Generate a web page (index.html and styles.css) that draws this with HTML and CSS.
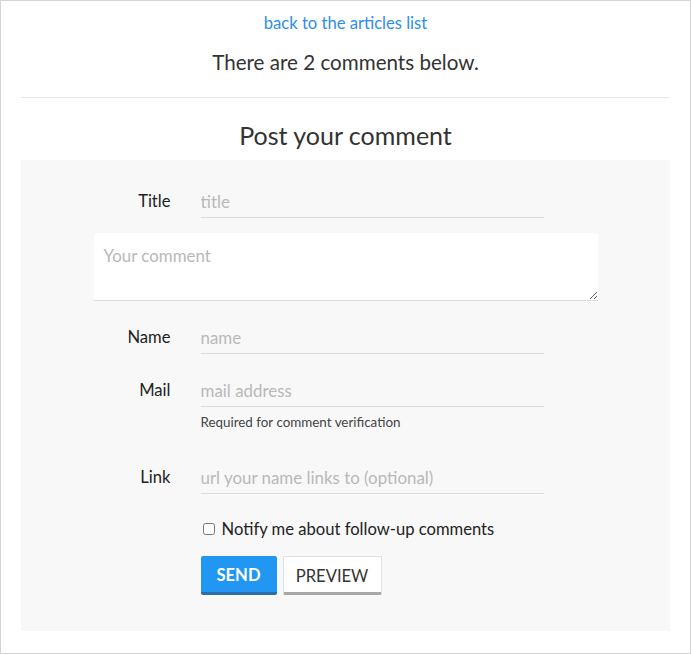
FILE: index.html
```html
<!DOCTYPE html>
<html>
<head>
<meta charset="utf-8">
<link rel="stylesheet" href="styles.css">
</head>
<body>
<div class="page">
  <div class="top">
    <a class="back" href="#">back to the articles list</a>
    <p class="count">There are 2 comments below.</p>
  </div>
  <hr class="sep">
  <h2 class="post-title">Post your comment</h2>
  <form class="form-box">
    <div class="inner">
      <div class="row row-title">
        <label class="lbl">Title</label>
        <input class="field" type="text" placeholder="title">
      </div>
      <textarea class="comment" placeholder="Your comment"></textarea>
      <div class="row row-name">
        <label class="lbl">Name</label>
        <input class="field" type="text" placeholder="name">
      </div>
      <div class="row row-mail">
        <label class="lbl">Mail</label>
        <input class="field" type="text" placeholder="mail address">
      </div>
      <div class="row row-help">
        <span></span>
        <span class="help">Required for comment verification</span>
      </div>
      <div class="row row-link">
        <label class="lbl">Link</label>
        <input class="field" type="text" placeholder="url your name links to (optional)">
      </div>
      <div class="row row-check">
        <span></span>
        <label class="check"><input type="checkbox"> Notify me about follow-up comments</label>
      </div>
      <div class="row row-btns">
        <span></span>
        <div class="btns">
          <button type="button" class="btn btn-send">SEND</button>
          <button type="button" class="btn btn-preview">PREVIEW</button>
        </div>
      </div>
    </div>
  </form>
</div>
</body>
</html>
```
FILE: styles.css
```css
* { box-sizing: border-box; }
html, body { margin: 0; padding: 0; background: #fff; }
body {
  font-family: Lato, "Open Sans", sans-serif;
  color: #333;
}
.page {
  width: 691px;
  height: 654px;
  border: 1px solid #d4d4d4;
  padding: 0 20px;
  overflow: hidden;
}
.top { text-align: center; padding-top: 11px; }
.back {
  display: block;
  font-size: 16.6px;
  line-height: 22px;
  color: #2e8ee8;
  text-decoration: none;
}
.count {
  margin: 15px 0 0;
  font-size: 20.6px;
  line-height: 26px;
  color: #333;
}
.sep {
  margin: 22px 0 0;
  border: 0;
  border-top: 1px solid #e6e6e6;
  height: 0;
}
.post-title {
  margin: 0;
  padding-top: 22px;
  font-size: 25px;
  font-weight: normal;
  line-height: 30px;
  text-align: center;
  color: #333;
  height: 62px;
}
.form-box {
  display: block;
  background: #f8f8f8;
  padding: 23px 0 36px;
}
.inner {
  width: 504px;
  margin: 0 auto;
}
.row {
  display: grid;
  grid-template-columns: 107px 343px;
  align-items: center;
}
.lbl {
  text-align: right;
  padding-right: 30px;
  font-size: 16.6px;
  color: #222;
}
.field {
  height: 35px;
  border: 0;
  border-bottom: 1px solid #dcdcdc;
  background: transparent;
  font-family: inherit;
  font-size: 16.9px;
  color: #333;
  padding: 2px 0 0;
  outline: none;
}
.field::placeholder, .comment::placeholder { color: #b8b8b8; }
.comment {
  display: block;
  width: 504px;
  height: 68px;
  margin: 15px 0 18px;
  border: 0;
  border-bottom: 1px solid #dcdcdc;
  border-radius: 3px 3px 0 0;
  background: #fff;
  padding: 12px 10px;
  font-family: inherit;
  font-size: 16.9px;
  outline: none;
  resize: vertical;
}
.row-mail { margin-top: 18px; }
.help {
  font-size: 13.4px;
  line-height: 22px;
  color: #444;
  margin-top: 4px;
}
.row-link { margin-top: 26px; }
.row-check { margin-top: 24px; }
.check {
  font-size: 16.6px;
  line-height: 22px;
  color: #222;
  display: flex;
  align-items: center;
  gap: 7px;
}
.check input { margin: 0 0 0 2px; width: 12px; height: 12px; }
.row-btns { margin-top: 16px; }
.btns { display: flex; gap: 6px; }
.btn {
  height: 39px;
  font-family: inherit;
  font-size: 16.6px;
  padding: 2px 0 0;
  border-radius: 2px;
  cursor: pointer;
}
.btn-send {
  background: #2196f3;
  color: #fff;
  font-weight: bold;
  border: 0;
  border-bottom: 3px solid #2c6fa6;
  width: 76px;
}
.btn-preview {
  background: #fff;
  color: #333;
  border: 1px solid #e0e0e0;
  border-bottom: 3px solid #a8a8a8;
  width: 99px;
}
```
